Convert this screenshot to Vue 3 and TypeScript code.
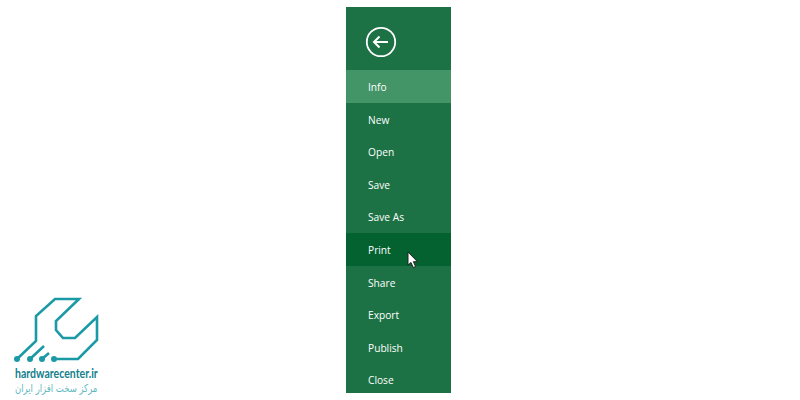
<script setup lang="ts">
interface MenuItem {
  label: string;
  state?: "selected" | "hover";
}

const items: MenuItem[] = [
  { label: "Info", state: "selected" },
  { label: "New" },
  { label: "Open" },
  { label: "Save" },
  { label: "Save As" },
  { label: "Print", state: "hover" },
  { label: "Share" },
  { label: "Export" },
  { label: "Publish" },
  { label: "Close" },
];
</script>

<template>
  <div class="page">
    <nav class="backstage">
      <div class="back">
        <svg width="32" height="32" viewBox="0 0 32 32" fill="none" stroke="#fff">
          <circle cx="16" cy="16" r="14.2" stroke-width="1.8" />
          <path d="M9 16H23M14.5 10.5L9 16L14.5 21.5" stroke-width="2" />
        </svg>
      </div>
      <ul class="menu">
        <li v-for="item in items" :key="item.label" :class="['row', item.state]">
          {{ item.label }}
          <svg v-if="item.state === 'hover'" class="cursor" width="12" height="18" viewBox="0 0 12 18">
            <path d="M1 1V14L4 11.5L6.2 16.5L8.6 15.5L6.4 10.7H10.5Z" fill="#fff" stroke="#222" stroke-width="1" />
          </svg>
        </li>
      </ul>
    </nav>

    <div class="brand">
      <svg class="mark" width="90" height="70" viewBox="12 295 90 70" fill="none">
        <path
          d="M54 359H78L97 340V317L75 338H63L56 330V321L79 299H55L36 316V341L17 359"
          stroke="#1b9aa6"
          stroke-width="2.6"
        />
        <path d="M30 359L44 346M42 359L49 353" stroke="#1b9aa6" stroke-width="2.6" />
        <g fill="#1b9aa6">
          <circle cx="17" cy="359" r="3" />
          <circle cx="30" cy="359" r="3" />
          <circle cx="42" cy="359" r="3" />
          <circle cx="54" cy="359" r="3" />
        </g>
      </svg>
      <div class="domain">hardwarecenter.ir</div>
      <div class="tagline" dir="rtl">مرکز سخت افزار ایران</div>
    </div>
  </div>
</template>

<style scoped>
.page {
  position: relative;
  width: 800px;
  height: 400px;
  background: #fff;
  display: flex;
  justify-content: center;
  overflow: hidden;
  font-family: "Open Sans", "Liberation Sans", sans-serif;
}
.backstage {
  width: 105px;
  height: 386px;
  margin: 7px 3px 0 0;
  background: #1c7244;
  color: #fff;
  overflow: hidden;
}
.back {
  height: 63px;
  padding: 19px 0 0 19px;
  box-sizing: border-box;
}
.menu {
  list-style: none;
  margin: 0;
  padding: 0;
}
.row {
  position: relative;
  height: 32.6px;
  line-height: 35.84px;
  padding-left: 22px;
  font-size: 10.2px;
}
.row.selected {
  background: #439467;
}
.row.hover {
  background: #036230;
}
.cursor {
  position: absolute;
  left: 61px;
  top: 18px;
}
.brand {
  position: absolute;
  left: 12px;
  top: 295px;
  width: 90px;
}
.mark {
  display: block;
}
.domain {
  width: fit-content;
  margin-left: 3px;
  font-family: Lato, sans-serif;
  font-size: 13px;
  font-weight: 700;
  color: #14808c;
  line-height: 16px;
  white-space: nowrap;
  transform: scaleX(0.81);
  transform-origin: left center;
}
.tagline {
  width: fit-content;
  margin-left: 3px;
  font-family: "DejaVu Sans", sans-serif;
  font-size: 11px;
  color: #5fb8c0;
  line-height: 16px;
  white-space: nowrap;
  transform: scaleX(0.77);
  transform-origin: left center;
}
</style>
